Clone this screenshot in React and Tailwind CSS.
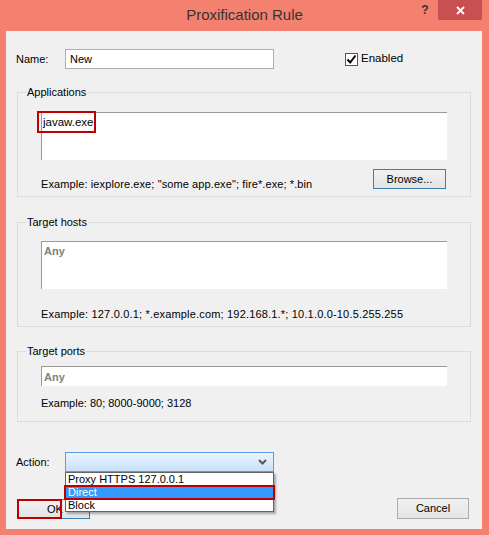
export default function App() {
  const font = { fontFamily: '"Liberation Sans", Arial, sans-serif' };
  return (
    <div
      className="w-[489px] h-[535px] bg-[#f4806f] flex flex-col text-[11px] text-black overflow-hidden"
      style={font}
    >
      {/* Title bar */}
      <div className="h-[31px] flex shrink-0">
        <div className="w-[77px]" />
        <div className="flex-1 text-center text-[15px] leading-[30px] text-[#333]">
          Proxification Rule
        </div>
        <div className="w-[77px] flex items-start">
          <div className="w-[26px] h-[20px] flex items-center justify-center text-[12px] font-bold text-[#333]">
            ?
          </div>
          <div className="w-[44px] h-[20px] bg-[#c75050] flex items-center justify-center">
            <svg width="9" height="9" viewBox="0 0 9 9">
              <path d="M1 1 L8 8 M8 1 L1 8" stroke="#fff" strokeWidth="1.8" />
            </svg>
          </div>
        </div>
      </div>

      {/* Client area */}
      <div className="mx-[6px] w-[476px] h-[498px] bg-[#f0f0f0] flex flex-col">
        {/* Name row */}
        <div className="mt-[18px] h-[20px] flex items-center">
          <div className="ml-[10px] w-[49px]">Name:</div>
          <div className="w-[209px] h-[20px] border border-[#abadb3] bg-white flex items-center pl-[4px]">
            New
          </div>
          <div className="ml-[71px] flex items-center">
            <div className="w-[13px] h-[13px] border border-[#555] bg-white flex items-center justify-center">
              <svg width="11" height="11" viewBox="0 0 11 11">
                <path d="M1.5 5.5 L4.2 8.5 L9.5 1.5" stroke="#000" strokeWidth="2" fill="none" />
              </svg>
            </div>
            <span className="ml-[3px] text-[11.5px]">Enabled</span>
          </div>
        </div>

        {/* Applications */}
        <div className="mt-[23px] mx-[11px] h-[105px] border border-[#dcdcdc] relative flex flex-col px-[23px] pt-[19px]">
          <span className="absolute -top-[8px] left-[8px] bg-[#f0f0f0] px-[1px] leading-[14px]">
            Applications
          </span>
          <div className="h-[48px] bg-white border-t border-l border-[#9a9a9a] relative">
            <span className="absolute left-[1px] top-[1px] text-[11.5px] leading-[16px]">javaw.exe</span>
            <div className="absolute -left-[5px] -top-[2px] w-[59px] h-[22px] border-2 border-[#c00000]" />
          </div>
          <div className="mt-[9px] flex justify-between items-start">
            <span className="pt-[8px] leading-[14px] tracking-[0.1px]">
              Example: iexplore.exe; "some app.exe"; fire*.exe; *.bin
            </span>
            <div className="w-[73px] h-[20px] border border-[#3c7fb1] bg-gradient-to-b from-[#f2f2f2] to-[#e3e3e3] flex items-center justify-center mr-[1px]">
              Browse...
            </div>
          </div>
        </div>

        {/* Target hosts */}
        <div className="mt-[25px] mx-[11px] h-[105px] border border-[#dcdcdc] relative flex flex-col px-[23px] pt-[18px]">
          <span className="absolute -top-[8px] left-[8px] bg-[#f0f0f0] px-[1px] leading-[14px]">
            Target hosts
          </span>
          <div className="h-[48px] bg-white border-t border-l border-[#9a9a9a] relative">
            <span className="absolute left-[2px] top-[1px] font-bold text-[#808080] leading-[16px]">Any</span>
          </div>
          <div className="mt-[18px] leading-[14px] tracking-[0.18px]">
            Example: 127.0.0.1; *.example.com; 192.168.1.*; 10.1.0.0-10.5.255.255
          </div>
        </div>

        {/* Target ports */}
        <div className="mt-[24px] mx-[11px] h-[71px] border border-[#dcdcdc] relative flex flex-col px-[23px] pt-[14px]">
          <span className="absolute -top-[8px] left-[8px] bg-[#f0f0f0] px-[1px] leading-[14px]">
            Target ports
          </span>
          <div className="h-[20px] bg-white border-t border-l border-[#9a9a9a] relative flex items-center">
            <span className="pl-[2px] font-bold text-[#808080] leading-[16px]">Any</span>
          </div>
          <div className="mt-[10px] leading-[14px]">Example: 80; 8000-9000; 3128</div>
        </div>

        {/* Action row */}
        <div className="mt-[30px] h-[20px] flex items-center">
          <div className="ml-[10px] w-[49px]">Action:</div>
          <div className="relative w-[209px] h-[20px]">
            <div className="w-full h-full border border-[#569de5] bg-gradient-to-b from-[#ecf4fc] to-[#c9e1fa] flex items-center justify-end pr-[6px]">
              <svg width="9" height="6" viewBox="0 0 9 6">
                <path d="M1 1 L4.5 4.5 L8 1" stroke="#555" strokeWidth="2" fill="none" />
              </svg>
            </div>
            {/* Dropdown list */}
            <div className="absolute left-0 top-[20px] w-[209px] h-[40px] bg-white border border-[#646464] z-10 shadow-[2px_2px_2px_rgba(0,0,0,0.3)] flex flex-col">
              <div className="h-[13px] leading-[13px] pl-[2px]">Proxy HTTPS 127.0.0.1</div>
              <div className="h-[13px] leading-[13px] pl-[2px] bg-[#3399ff] text-white">Direct</div>
              <div className="h-[12px] leading-[13px] pl-[2px]">Block</div>
              <div className="absolute -left-[2px] top-[12px] w-[211px] h-[15px] border-2 border-[#c00000]" />
            </div>
          </div>
        </div>

        {/* Buttons */}
        <div className="mt-[27px] flex items-start">
          <div className="ml-[11px] w-[73px] h-[20px] border border-[#3c7fb1] bg-gradient-to-b from-[#f2f2f2] to-[#e3e3e3] relative flex items-center pl-[29px]">
            OK
            <div className="absolute -left-[1px] -top-[1px] w-[45px] h-[20px] border-2 border-[#c00000]" />
          </div>
          <div className="ml-[307px] -mt-[1px] w-[72px] h-[21px] border border-[#acacac] bg-gradient-to-b from-[#f0f0f0] to-[#e5e5e5] flex items-center justify-center">
            Cancel
          </div>
        </div>
      </div>
    </div>
  );
}
